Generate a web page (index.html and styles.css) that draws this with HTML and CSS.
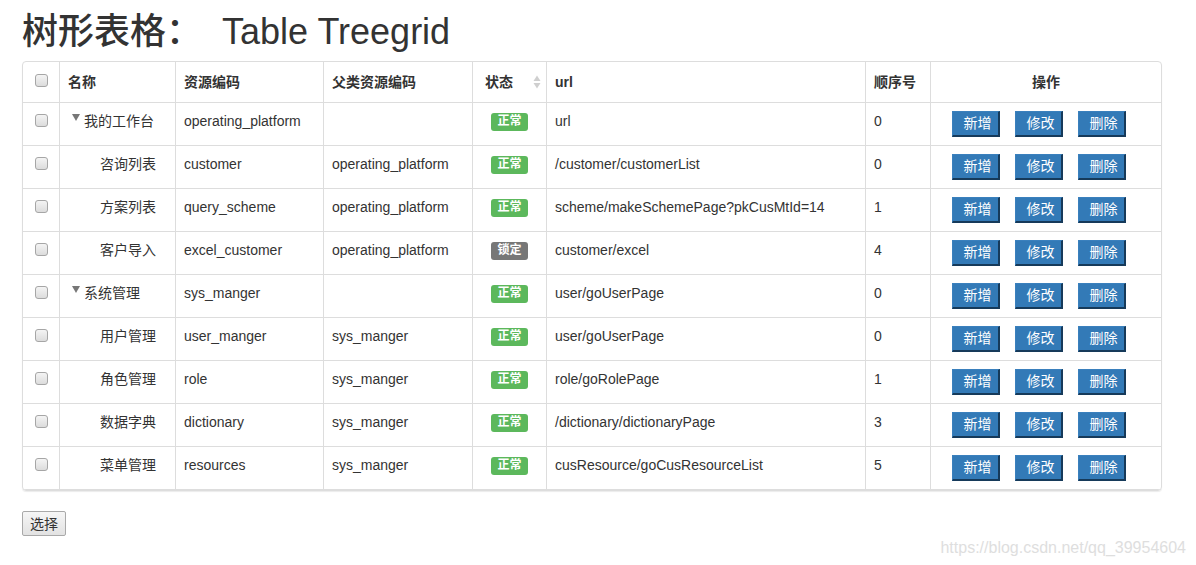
FILE: index.html
```html
<!DOCTYPE html>
<html lang="zh-CN">
<head>
    <meta charset="UTF-8">
    <title>树形表格 Table Treegrid</title>
    <link rel="stylesheet" href="styles.css">
</head>
<body>
    <div class="page">
        <h1 class="title">树形表格：&nbsp; Table Treegrid</h1>
        <div class="table-wrap">
            <table class="grid">
                <thead>
                    <tr>
                        <th class="col-check"><input type="checkbox"></th>
                        <th class="col-name">名称</th>
                        <th class="col-code">资源编码</th>
                        <th class="col-parent">父类资源编码</th>
                        <th class="col-status">状态<svg class="sort" width="8" height="16" viewBox="0 0 8 16"><polygon points="0.5,7 4,1.5 7.5,7" fill="#cfcfcf"/><polygon points="0.5,9 4,14.5 7.5,9" fill="#cfcfcf"/></svg></th>
                        <th class="col-url">url</th>
                        <th class="col-order">顺序号</th>
                        <th class="col-op">操作</th>
                    </tr>
                </thead>
                <tbody>
                    <tr>
                        <td class="cell-check"><input type="checkbox"></td>
                        <td><span class="node"><i class="caret"></i>我的工作台</span></td>
                        <td>operating_platform</td>
                        <td></td>
                        <td class="cell-status"><span class="label label-ok">正常</span></td>
                        <td>url</td>
                        <td>0</td>
                        <td class="cell-op"><button class="btn-op">新增</button><button class="btn-op">修改</button><button class="btn-op">删除</button></td>
                    </tr>
                    <tr>
                        <td class="cell-check"><input type="checkbox"></td>
                        <td><span class="leaf">咨询列表</span></td>
                        <td>customer</td>
                        <td>operating_platform</td>
                        <td class="cell-status"><span class="label label-ok">正常</span></td>
                        <td>/customer/customerList</td>
                        <td>0</td>
                        <td class="cell-op"><button class="btn-op">新增</button><button class="btn-op">修改</button><button class="btn-op">删除</button></td>
                    </tr>
                    <tr>
                        <td class="cell-check"><input type="checkbox"></td>
                        <td><span class="leaf">方案列表</span></td>
                        <td>query_scheme</td>
                        <td>operating_platform</td>
                        <td class="cell-status"><span class="label label-ok">正常</span></td>
                        <td>scheme/makeSchemePage?pkCusMtId=14</td>
                        <td>1</td>
                        <td class="cell-op"><button class="btn-op">新增</button><button class="btn-op">修改</button><button class="btn-op">删除</button></td>
                    </tr>
                    <tr>
                        <td class="cell-check"><input type="checkbox"></td>
                        <td><span class="leaf">客户导入</span></td>
                        <td>excel_customer</td>
                        <td>operating_platform</td>
                        <td class="cell-status"><span class="label label-lock">锁定</span></td>
                        <td>customer/excel</td>
                        <td>4</td>
                        <td class="cell-op"><button class="btn-op">新增</button><button class="btn-op">修改</button><button class="btn-op">删除</button></td>
                    </tr>
                    <tr>
                        <td class="cell-check"><input type="checkbox"></td>
                        <td><span class="node"><i class="caret"></i>系统管理</span></td>
                        <td>sys_manger</td>
                        <td></td>
                        <td class="cell-status"><span class="label label-ok">正常</span></td>
                        <td>user/goUserPage</td>
                        <td>0</td>
                        <td class="cell-op"><button class="btn-op">新增</button><button class="btn-op">修改</button><button class="btn-op">删除</button></td>
                    </tr>
                    <tr>
                        <td class="cell-check"><input type="checkbox"></td>
                        <td><span class="leaf">用户管理</span></td>
                        <td>user_manger</td>
                        <td>sys_manger</td>
                        <td class="cell-status"><span class="label label-ok">正常</span></td>
                        <td>user/goUserPage</td>
                        <td>0</td>
                        <td class="cell-op"><button class="btn-op">新增</button><button class="btn-op">修改</button><button class="btn-op">删除</button></td>
                    </tr>
                    <tr>
                        <td class="cell-check"><input type="checkbox"></td>
                        <td><span class="leaf">角色管理</span></td>
                        <td>role</td>
                        <td>sys_manger</td>
                        <td class="cell-status"><span class="label label-ok">正常</span></td>
                        <td>role/goRolePage</td>
                        <td>1</td>
                        <td class="cell-op"><button class="btn-op">新增</button><button class="btn-op">修改</button><button class="btn-op">删除</button></td>
                    </tr>
                    <tr>
                        <td class="cell-check"><input type="checkbox"></td>
                        <td><span class="leaf">数据字典</span></td>
                        <td>dictionary</td>
                        <td>sys_manger</td>
                        <td class="cell-status"><span class="label label-ok">正常</span></td>
                        <td>/dictionary/dictionaryPage</td>
                        <td>3</td>
                        <td class="cell-op"><button class="btn-op">新增</button><button class="btn-op">修改</button><button class="btn-op">删除</button></td>
                    </tr>
                    <tr>
                        <td class="cell-check"><input type="checkbox"></td>
                        <td><span class="leaf">菜单管理</span></td>
                        <td>resources</td>
                        <td>sys_manger</td>
                        <td class="cell-status"><span class="label label-ok">正常</span></td>
                        <td>cusResource/goCusResourceList</td>
                        <td>5</td>
                        <td class="cell-op"><button class="btn-op">新增</button><button class="btn-op">修改</button><button class="btn-op">删除</button></td>
                    </tr>
                </tbody>
            </table>
        </div>
        <div class="actions">
            <button class="btn-select">选择</button>
        </div>
    </div>
    <div class="watermark">https://blog.csdn.net/qq_39954604</div>
</body>
</html>
```

FILE: styles.css
```css
body {
    margin: 0;
    font-family: "Liberation Sans", Arial, "Noto Sans CJK SC", sans-serif;
    font-size: 14px;
    line-height: 20px;
    color: #333333;
    background: #ffffff;
}

.page {
    width: 1140px;
    margin-left: 22px;
}

.title {
    margin: 12px 0 9px;
    font-size: 36px;
    font-weight: 500;
    line-height: 40px;
    color: #333333;
}

.table-wrap {
    border: 1px solid #dddddd;
    border-radius: 4px;
    overflow: hidden;
    box-shadow: 0 1px 1px rgba(0, 0, 0, 0.08);
}

.grid {
    width: 100%;
    table-layout: fixed;
    border-collapse: separate;
    border-spacing: 0;
}

.grid th,
.grid td {
    box-sizing: border-box;
    border-left: 1px solid #dddddd;
    border-bottom: 1px solid #dddddd;
    text-align: left;
    white-space: nowrap;
    overflow: hidden;
}

.grid th:first-child,
.grid td:first-child {
    border-left: none;
}

.grid th {
    height: 41px;
    padding: 10px 8px;
    font-weight: bold;
    vertical-align: top;
}

.grid td {
    height: 43px;
    padding: 8px;
    vertical-align: top;
}

.col-check { width: 36px; }
.col-name { width: 116px; }
.col-code { width: 148px; }
.col-parent { width: 149px; }
.col-status { width: 74px; }
.col-url { width: 319px; }
.col-order { width: 65px; }
.col-op { width: 231px; }

.grid th.col-check,
.grid td.cell-check {
    text-align: center;
    padding-left: 0;
    padding-right: 0;
}

.grid th.col-op,
.grid td.cell-op,
.grid td.cell-status {
    text-align: center;
}

.grid th.col-status {
    padding-left: 12px;
    padding-right: 5px;
}

.sort {
    float: right;
    margin-top: 2px;
}

input[type="checkbox"] {
    -webkit-appearance: none;
    appearance: none;
    width: 13px;
    height: 13px;
    margin: 3px 0 0;
    vertical-align: top;
    border: 1px solid #a6a6a6;
    border-radius: 3px;
    background: linear-gradient(#f4f4f4, #dcdcdc);
    box-sizing: border-box;
}

.grid th input[type="checkbox"] {
    margin-top: 2px;
}

.node {
    display: inline-block;
    padding-left: 4px;
}

.caret {
    display: inline-block;
    width: 0;
    height: 0;
    margin-right: 4px;
    vertical-align: 5px;
    border-left: 4px solid transparent;
    border-right: 4px solid transparent;
    border-top: 7px solid #777777;
}

.leaf {
    display: inline-block;
    padding-left: 32px;
}

.label {
    display: inline-block;
    padding: 2px 6px 4px;
    font-size: 12px;
    font-weight: bold;
    line-height: 12px;
    color: #ffffff;
    border-radius: 3px;
    vertical-align: 1px;
}

.label-ok {
    background-color: #5cb85c;
}

.label-lock {
    background-color: #777777;
}

.btn-op {
    display: inline-block;
    box-sizing: border-box;
    height: 26px;
    margin: 0 15px 0 0;
    padding: 0 6px 0 11px;
    font-family: inherit;
    font-size: 14px;
    line-height: 23px;
    color: #ffffff;
    background-color: #337ab7;
    border-style: solid;
    border-width: 1px 2px 2px 1px;
    border-color: #3a80bd #163a5a #163a5a #3a80bd;
    vertical-align: top;
    cursor: pointer;
}

.actions {
    margin-top: 20px;
}

.btn-select {
    display: block;
    box-sizing: border-box;
    height: 25px;
    padding: 0 7px;
    font-family: inherit;
    font-size: 14px;
    line-height: 22px;
    color: #333333;
    background: linear-gradient(#f6f6f6, #e2e2e2);
    border: 1px solid #a9a9a9;
    border-radius: 2px;
}

.watermark {
    position: absolute;
    right: 10px;
    bottom: 8px;
    font-size: 16px;
    line-height: 18px;
    color: #dedede;
}
```
